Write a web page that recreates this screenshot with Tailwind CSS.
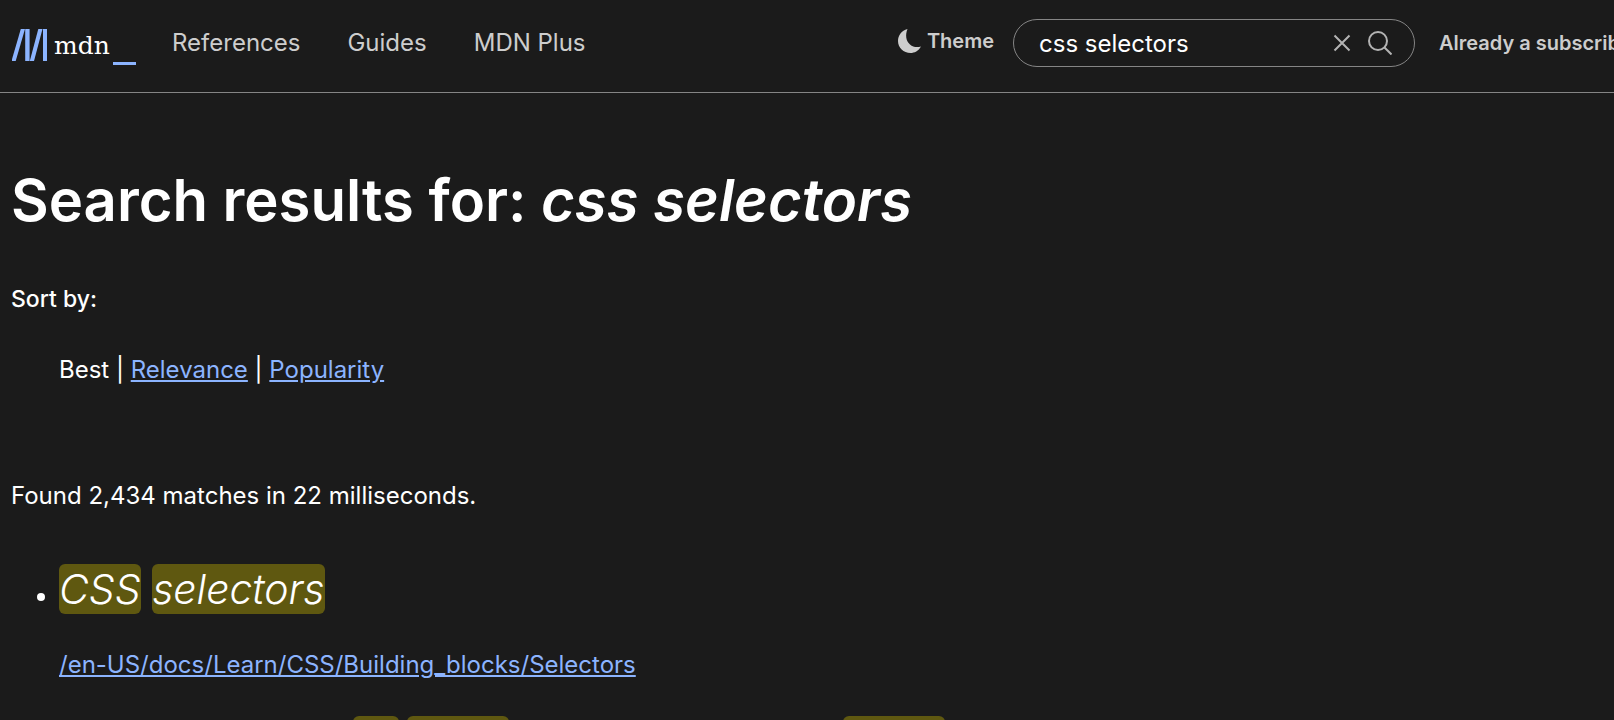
<!DOCTYPE html>
<html lang="en">
<head>
<meta charset="utf-8">
<title>Search results for: css selectors | MDN</title>
<script src="https://cdn.jsdelivr.net/npm/@tailwindcss/browser@4"></script>
</head>
<body class="h-screen overflow-hidden bg-[#1b1b1b] font-[Inter,sans-serif] text-2xl/[42px] text-white">
<header class="flex h-[93px] items-start overflow-hidden border-b border-[#858585] pl-3 whitespace-nowrap text-[#cdcdcd]">
  <a href="#" aria-label="MDN homepage" class="mt-7 shrink-0">
    <svg class="h-[38px] w-[124px]" viewBox="0 0 124 38">
      <g fill="#8cb4ff">
        <path d="M8.800 1h4.200L3.700 33h-4.200z"/>
        <path d="M13.200 1h4.400v32h-4.400z"/>
        <path d="M26.300 1h4.200L22 33h-4.200z"/>
        <path d="M31 1h4v32h-4z"/>
        <path d="M101 34h23v3h-23z"/>
      </g>
      <text x="42" y="26" font-family="'DejaVu Serif', serif" font-size="25" fill="#fff">mdn</text>
    </svg>
  </a>
  <nav class="mt-[22px] ml-9 flex gap-[47px]">
    <a href="#">References</a>
    <a href="#">Guides</a>
    <a href="#">MDN Plus</a>
  </nav>
  <div class="ml-auto flex shrink-0 items-start">
    <button type="button" class="mt-5 flex items-start gap-[5px] text-xl/[42px] font-semibold">
      <svg class="mt-[9px] size-6" viewBox="0 0 24 24" fill="#cdcdcd"><path d="M9.500 0C7 6 8 12 12 15.500C15 18.200 19 18.600 23 17.500C20.500 22 16.500 24 12.500 24C5.500 24 0 18.600 0 12C0 6.500 3.500 1.500 9.500 0z"/></svg>
      <span class="leading-[42px]">Theme</span>
    </button>
    <form role="search" class="mt-[19px] ml-[19px] flex h-12 w-[402px] items-center rounded-full border border-[#858585] pr-[22px] pl-[25px]">
      <input type="text" aria-label="Search MDN" value="css selectors" class="min-w-0 flex-1 pt-[2px] text-white outline-none">
      <button type="button" aria-label="Clear search" class="mr-[14px]">
        <svg class="size-6" viewBox="0 0 24 24" fill="none" stroke="#b3b3b3" stroke-width="2"><path d="M4.500 4.500l15 15M19.500 4.500l-15 15"/></svg>
      </button>
      <button type="submit" aria-label="Search">
        <svg class="size-6" viewBox="0 0 24 24" fill="none" stroke="#b3b3b3" stroke-width="2"><circle cx="10" cy="10" r="9"/><path d="M16.500 16.500L23.500 23.500"/></svg>
      </button>
    </form>
    <a href="#" class="mt-[22px] ml-6 w-[175px] overflow-hidden text-xl/[42px] font-semibold">Already a subscriber?</a>
  </div>
</header>
<main class="px-[11px]">
  <h1 class="mt-[71px] text-[58px]/[72px] font-semibold">Search results for: <em>css selectors</em></h1>
  <h2 class="mt-[42px] text-[23px]/[42px] font-medium">Sort by:</h2>
  <ul class="mt-[29px] flex pl-12">
    <li>Best&nbsp;</li>
    <li class="before:content-['|_']"><a href="#" class="text-[#8cb4ff] underline">Relevance</a>&nbsp;</li>
    <li class="before:content-['|_']"><a href="#" class="text-[#8cb4ff] underline">Popularity</a></li>
  </ul>
  <p class="mt-[84px]">Found 2,434 matches in 22 milliseconds.</p>
  <ul class="mt-[42px] list-disc pl-12">
    <li>
      <h3 class="text-[41px]/[60px] font-light italic"><a href="#"><mark class="rounded-md bg-[#5f5810] text-white">CSS</mark> <mark class="rounded-md bg-[#5f5810] text-white">selectors</mark></a></h3>
      <p class="mt-[25px]"><a href="#" class="text-[#8cb4ff] underline">/en-US/docs/Learn/CSS/Building_blocks/Selectors</a></p>
      <p class="mt-[30px] ml-[294px] flex">
        <mark class="h-8 w-[46px] rounded-md bg-[#5f5810]"></mark>
        <mark class="ml-2 h-8 w-[102px] rounded-md bg-[#5f5810]"></mark>
        <mark class="ml-[334px] h-8 w-[102px] rounded-md bg-[#5f5810]"></mark>
      </p>
    </li>
  </ul>
</main>
</body>
</html>
